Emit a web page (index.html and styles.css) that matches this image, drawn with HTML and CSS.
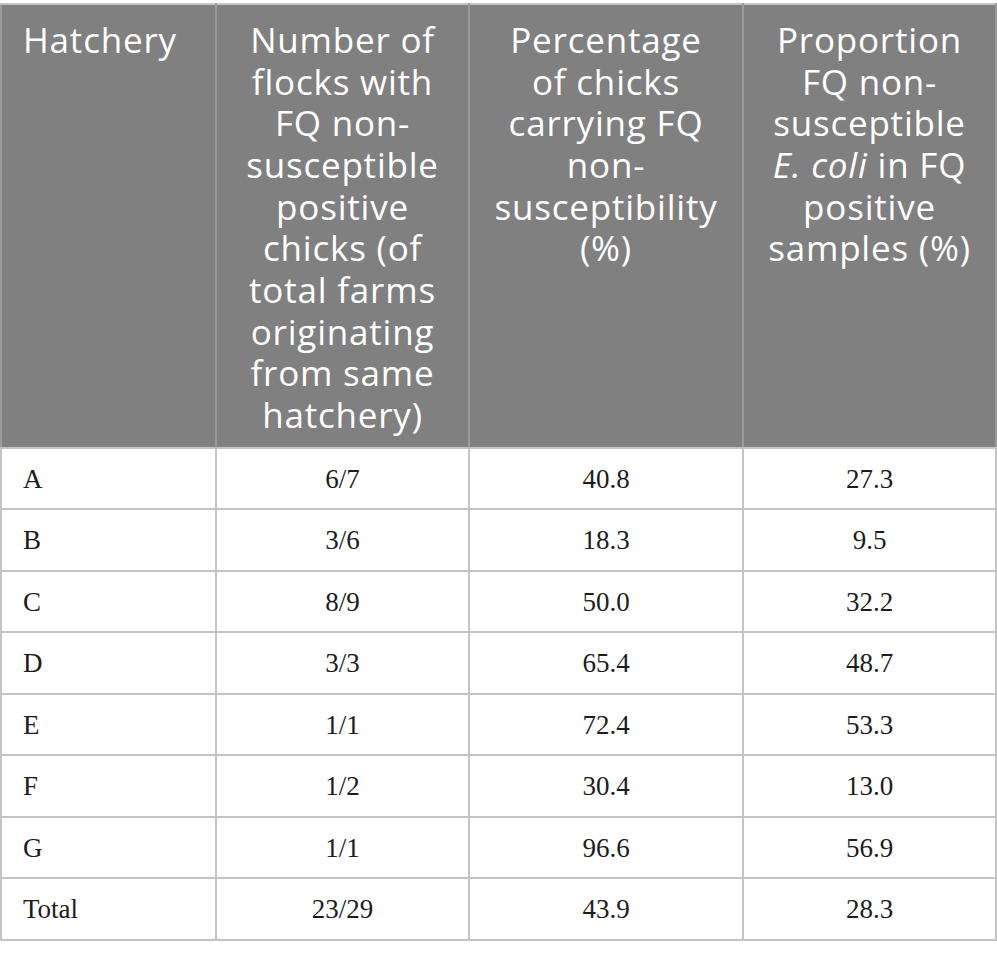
FILE: index.html
```html
<!DOCTYPE html>
<html lang="en">
<head>
  <meta charset="UTF-8">
  <title>FQ non-susceptibility by hatchery</title>
  <meta name="viewport" content="width=device-width, initial-scale=1.0">
  <link rel="stylesheet" href="styles.css">
</head>
<body>

  <table class="data-table">
    <colgroup>
      <col class="col-hatchery">
      <col class="col-flocks">
      <col class="col-percent">
      <col class="col-proportion">
    </colgroup>
    <thead>
      <tr>
        <th class="left">Hatchery</th>
        <th>Number of<br>flocks with<br>FQ non-<br>susceptible<br>positive<br>chicks (of<br>total farms<br>originating<br>from same<br>hatchery)</th>
        <th>Percentage<br>of chicks<br>carrying FQ<br>non-<br>susceptibility<br>(%)</th>
        <th>Proportion<br>FQ non-<br>susceptible<br><i>E. coli</i> in FQ<br>positive<br>samples (%)</th>
      </tr>
    </thead>
    <tbody>
      <tr><td class="left">A</td><td>6/7</td><td>40.8</td><td>27.3</td></tr>
      <tr><td class="left">B</td><td>3/6</td><td>18.3</td><td>9.5</td></tr>
      <tr><td class="left">C</td><td>8/9</td><td>50.0</td><td>32.2</td></tr>
      <tr><td class="left">D</td><td>3/3</td><td>65.4</td><td>48.7</td></tr>
      <tr><td class="left">E</td><td>1/1</td><td>72.4</td><td>53.3</td></tr>
      <tr><td class="left">F</td><td>1/2</td><td>30.4</td><td>13.0</td></tr>
      <tr><td class="left">G</td><td>1/1</td><td>96.6</td><td>56.9</td></tr>
      <tr><td class="left">Total</td><td>23/29</td><td>43.9</td><td>28.3</td></tr>
    </tbody>
  </table>

</body>
</html>
```

FILE: styles.css
```css
body {
  margin: 0;
  padding-top: 3px;
  background-color: #fff;
}

.data-table {
  width: 997px;
  table-layout: fixed;
  border-collapse: collapse;
  border: 2px solid #c4c4c4;
}

.col-hatchery { width: 215px; }
.col-flocks { width: 253px; }
.col-percent { width: 274px; }
.col-proportion { width: 253px; }

/* Header */
.data-table th {
  background-color: #7f807f;
  color: #fff;
  font-family: "Open Sans", "Noto Sans", sans-serif;
  font-weight: 400;
  font-size: 35px;
  letter-spacing: 0.8px;
  line-height: 41.67px;
  text-align: center;
  vertical-align: top;
  padding: 14px 6px 11px;
  border-left: 2px solid #999a99;
  border-right: 2px solid #999a99;
  border-top: 2px solid #c4c4c4;
  border-bottom: 2px solid #c4c4c4;
}

.data-table th i {
  font-style: italic;
}

/* Body */
.data-table td {
  font-family: "Liberation Serif", "Times New Roman", serif;
  font-size: 27px;
  color: #1c1c1c;
  text-align: center;
  vertical-align: middle;
  height: 57.5px;
  padding: 2px 21px 0;
  border: 2px solid #c4c4c4;
}

.data-table .left {
  text-align: left;
  padding-left: 21px;
}
```
